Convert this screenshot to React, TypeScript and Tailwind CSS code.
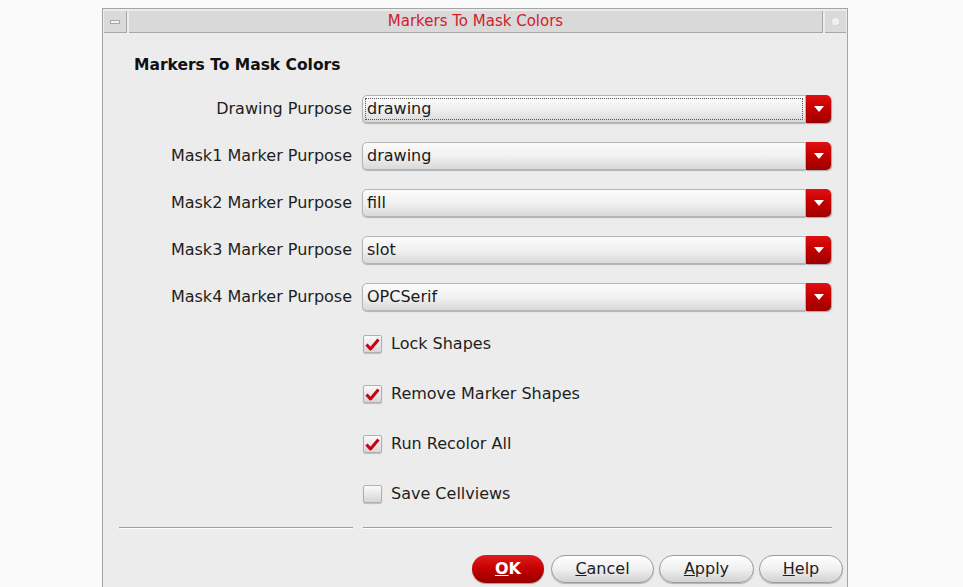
import React from "react";

const font = { fontFamily: '"DejaVu Sans", "Liberation Sans", sans-serif' };

function Combo({ value, focused }: { value: string; focused?: boolean }) {
  return (
    <div className="flex h-[28px] w-[469px] items-stretch">
      <div className="relative flex flex-1 items-center rounded-l-[5px] border border-[#b4b4b4] bg-gradient-to-b from-[#fbfbfb] via-[#f1f1f1] to-[#d9d9d9] pl-[4px] shadow-[0_1px_1px_rgba(0,0,0,0.25)]">
        {focused && (
          <div className="pointer-events-none absolute inset-y-[2px] left-[2px] right-[2px] border border-dotted border-[#555]" />
        )}
        <span className="text-[16px] leading-none text-[#1a1a1a]">{value}</span>
      </div>
      <div className="flex w-[25px] items-center justify-center rounded-r-[5px] bg-gradient-to-b from-[#e01010] via-[#c40000] to-[#9c0000] shadow-[1px_1px_1px_rgba(0,0,0,0.3)]">
        <svg width="10" height="6" viewBox="0 0 10 6">
          <path d="M0 0 H10 L5 6 Z" fill="#fff" />
        </svg>
      </div>
    </div>
  );
}

function Check({ checked, label }: { checked: boolean; label: string }) {
  return (
    <div className="flex h-[26px] items-center">
      <div className="flex h-[18px] w-[19px] items-center justify-center rounded-[2px] border border-[#b0b0b0] bg-gradient-to-b from-[#fafafa] to-[#d6d6d6] shadow-[0_1px_1px_rgba(0,0,0,0.2)]">
        {checked && (
          <svg width="15" height="13" viewBox="0 0 15 13">
            <path d="M1.5 6.5 L5.5 11 L13.5 1.5" stroke="#c80010" strokeWidth="3" fill="none" strokeLinejoin="round" />
          </svg>
        )}
      </div>
      <span className="ml-[9px] text-[16px] text-[#1e1e1e]">{label}</span>
    </div>
  );
}

function Btn({ children, w, primary, ml }: { children: React.ReactNode; w: number; primary?: boolean; ml: number }) {
  return (
    <div
      style={{ width: w, marginLeft: ml }}
      className={
        primary
          ? "flex h-[28px] items-center justify-center rounded-full bg-gradient-to-b from-[#e11a1a] via-[#c30000] to-[#960000] text-[16px] font-bold text-white shadow-[0_1px_1px_rgba(0,0,0,0.35)]"
          : "flex h-[28px] items-center justify-center rounded-full border border-[#9c9c9c] bg-gradient-to-b from-[#ffffff] via-[#f0f0f0] to-[#d2d2d2] text-[16px] text-[#1e1e1e] shadow-[0_1px_1px_rgba(0,0,0,0.25)]"
      }
    >
      {children}
    </div>
  );
}

export default function App() {
  const rows: [string, string, boolean][] = [
    ["Drawing Purpose", "drawing", true],
    ["Mask1 Marker Purpose", "drawing", false],
    ["Mask2 Marker Purpose", "fill", false],
    ["Mask3 Marker Purpose", "slot", false],
    ["Mask4 Marker Purpose", "OPCSerif", false],
  ];
  return (
    <div style={font} className="h-[587px] w-[963px] overflow-hidden bg-[#fafafa] pl-[102px] pt-[8px]">
      <div className="flex h-[579px] w-[746px] flex-col border-l border-r border-t border-[#a4a4a4] bg-[#ececec]">
        {/* title bar */}
        <div className="mt-[2px] flex h-[22px] items-stretch gap-[2px] px-[1px]">
          <div className="flex w-[23px] items-center justify-center border-b border-r border-[#a8a8a8] bg-[#dadada]">
            <div className="h-[4px] w-[10px] border border-[#a8a8a8] bg-[#f4f4f4]" />
          </div>
          <div className="flex flex-1 items-center justify-center border-b border-r border-[#a8a8a8] bg-[#d9d9d9] text-[15px] text-[#d0202a]">
            Markers To Mask Colors
          </div>
          <div className="flex w-[21px] items-center justify-center border-b border-[#a8a8a8] bg-[#dadada]">
            <div className="h-[9px] w-[9px] rounded-full border border-dotted border-[#bdbdbd] bg-[#f0f0f0]" />
          </div>
        </div>

        <div className="px-[16px]">
          <div className="mt-[22px] pl-[15px] text-[15.5px] font-bold leading-[20px] text-[#111]">Markers To Mask Colors</div>

          <div className="mt-[20px] flex flex-col gap-[19px]">
            {rows.map(([label, value, focused]) => (
              <div key={label} className="grid grid-cols-[233px_469px] items-center gap-[10px]">
                <div className="text-right text-[16px] text-[#1e1e1e]">{label}</div>
                <Combo value={value} focused={focused} />
              </div>
            ))}
          </div>

          <div className="ml-[244px] mt-[20px] flex flex-col gap-[24px]">
            <Check checked label="Lock Shapes" />
            <Check checked label="Remove Marker Shapes" />
            <Check checked label="Run Recolor All" />
            <Check checked={false} label="Save Cellviews" />
          </div>

          <div className="mt-[20px] grid grid-cols-[234px_469px] gap-[10px]">
            <div className="h-[2px] border-b border-t border-b-white border-t-[#a0a0a0]" />
            <div className="h-[2px] border-b border-t border-b-white border-t-[#a0a0a0]" />
          </div>
        </div>

        <div className="mt-[26px] flex pl-[369px]">
          <Btn w={72} ml={0} primary>
            <span><span className="underline">O</span>K</span>
          </Btn>
          <Btn w={103} ml={7}>
            <span><span className="underline">C</span>ancel</span>
          </Btn>
          <Btn w={95} ml={5}>
            <span><span className="underline">A</span>pply</span>
          </Btn>
          <Btn w={84} ml={5}>
            <span><span className="underline">H</span>elp</span>
          </Btn>
        </div>
      </div>
    </div>
  );
}
